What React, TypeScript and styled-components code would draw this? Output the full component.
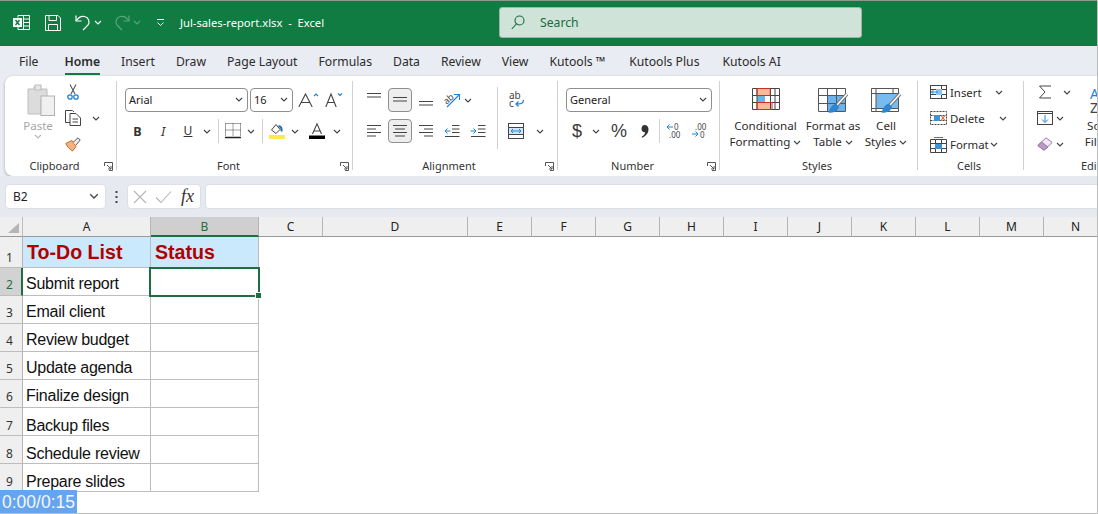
import React from 'react';
import styled, { createGlobalStyle } from 'styled-components';

const Global = createGlobalStyle`
  html, body { margin: 0; padding: 0; background: #fff; }
  body { font-family: "Noto Sans", "Open Sans", sans-serif; color: #333; }
  svg { overflow: visible; }
`;

const Page = styled.div`
  position: relative;
  width: 1098px;
  height: 514px;
  overflow: hidden;
  background: #fff;
  box-sizing: border-box;
  border-right: 1px solid #bdbdbd;
  border-bottom: 1px solid #bdbdbd;
`;

/* title bar */
const TitleBar = styled.div`
  height: 46px;
  background: #107c41;
  border-top: 1px solid #8a9c92;
  box-sizing: border-box;
  padding-bottom: 2px;
  display: flex;
  align-items: center;
  color: #fff;
`;

const QuickTool = styled.span<{ $w: number }>`
  width: ${p => p.$w}px;
  display: flex;
  justify-content: center;
  align-items: center;
  flex: none;
`;

const FileTitle = styled.span`
  font-size: 11.2px;
  white-space: pre;
  width: 319px;
  flex: none;
`;

const SearchBox = styled.div`
  width: 363px;
  height: 31px;
  box-sizing: border-box;
  background: #cfe3d8;
  border: 1px solid #9db5a8;
  border-radius: 3px;
  display: flex;
  align-items: center;
  gap: 15px;
  padding-left: 11px;
  color: #196b40;
  font-size: 12.2px;
`;

/* tabs */
const TabBar = styled.div`
  height: 30px;
  background: #e9ecf2;
  display: flex;
  align-items: center;
  padding-left: 19px;
  gap: 21px;
`;

const Tab = styled.span<{ $active?: boolean; $ml?: number }>`
  position: relative;
  font-size: 12.2px;
  font-weight: ${p => (p.$active ? 600 : 400)};
  color: #2b2b2b;
  white-space: nowrap;
  margin-left: ${p => p.$ml ?? 0}px;
  &::after {
    content: '';
    display: ${p => (p.$active ? 'block' : 'none')};
    position: absolute;
    left: 0;
    right: 0;
    bottom: -5px;
    height: 2px;
    background: #107c41;
  }
`;

/* ribbon */
const RibbonWrap = styled.div`
  background: #e9ecf2;
  height: 100px;
  padding-left: 5px;
`;

const Ribbon = styled.div`
  height: 100px;
  background: #fff;
  border-radius: 8px 0 0 8px;
  box-shadow: 0 1px 3px rgba(0, 0, 0, 0.3);
  display: flex;
  overflow: hidden;
`;

const Group = styled.section<{ $w: number; $last?: boolean }>`
  width: ${p => p.$w}px;
  flex: none;
  height: 100px;
  box-sizing: border-box;
  display: flex;
  flex-direction: column;
  position: relative;
  &::after {
    content: '';
    display: ${p => (p.$last ? 'none' : 'block')};
    position: absolute;
    right: 0;
    top: 5px;
    bottom: 6px;
    width: 1px;
    background: #d0d0d0;
  }
`;

const GroupBody = styled.div<{ $pl?: number }>`
  height: 82px;
  flex: none;
  padding-left: ${p => p.$pl ?? 0}px;
  display: flex;
`;

const GroupFooter = styled.div`
  display: flex;
  align-items: center;
  height: 14px;
  padding-right: 4px;
`;

const GroupLabel = styled.span`
  flex: 1;
  text-align: center;
  font-size: 11px;
  color: #333;
  white-space: nowrap;
`;

const LauncherSlot = styled.span`
  flex: none;
  display: flex;
  padding-top: 3px;
`;

const Stack = styled.div<{ $pt?: number; $gap?: number }>`
  display: flex;
  flex-direction: column;
  padding-top: ${p => p.$pt ?? 0}px;
  gap: ${p => p.$gap ?? 0}px;
`;

const Row = styled.div<{ $h?: number }>`
  display: flex;
  align-items: center;
  height: ${p => p.$h ?? 24}px;
`;

const Tool = styled.span<{ $w: number; $on?: boolean; $ml?: number }>`
  width: ${p => p.$w}px;
  height: 24px;
  margin-left: ${p => p.$ml ?? 0}px;
  flex: none;
  box-sizing: border-box;
  display: flex;
  align-items: center;
  justify-content: center;
  border-radius: 4px;
  background: ${p => (p.$on ? '#eeeeee' : 'transparent')};
  border: ${p => (p.$on ? '1px solid #8f8f8f' : 'none')};
  color: #333;
`;

const Divider = styled.span<{ $h?: number; $mx: number; $mr?: number; $mt?: number }>`
  width: 1px;
  flex: none;
  height: ${p => p.$h ?? 24}px;
  background: #d0d0d0;
  margin: ${p => p.$mt ?? 0}px ${p => p.$mr ?? p.$mx}px 0 ${p => p.$mx}px;
`;

const SelectBox = styled.div<{ $w: number; $ml?: number }>`
  width: ${p => p.$w}px;
  height: 24px;
  margin-left: ${p => p.$ml ?? 0}px;
  flex: none;
  box-sizing: border-box;
  border: 1px solid #8f8f8f;
  border-radius: 4px;
  display: flex;
  align-items: center;
  justify-content: space-between;
  padding: 0 4px 1px 3px;
  font-size: 11px;
  color: #222;
`;

const Paste = styled.div`
  width: 50px;
  margin-left: 8px;
  display: flex;
  flex-direction: column;
  align-items: center;
  padding-top: 8px;
  color: #a6a6a6;
  font-size: 11.5px;
  line-height: 16px;
`;

const BigButton = styled.div<{ $w: number }>`
  width: ${p => p.$w}px;
  flex: none;
  display: flex;
  flex-direction: column;
  align-items: center;
  padding-top: 12px;
  font-size: 11.6px;
  line-height: 16px;
  color: #2b2b2b;
  white-space: nowrap;
  svg { flex: none; }
`;

const BigIcon = styled.div`
  height: 30px;
`;

const ButtonLine = styled.span`
  display: flex;
  align-items: center;
  gap: 3px;
`;

const ListRow = styled.div`
  height: 26px;
  display: flex;
  align-items: center;
  font-size: 11.4px;
  color: #2b2b2b;
`;

const ListLabel = styled.span<{ $w: number }>`
  width: ${p => p.$w}px;
  margin-left: 3px;
  flex: none;
`;

const BoldMark = styled.span`
  font-weight: 700;
  font-size: 12.5px;
`;

const ItalicMark = styled.span`
  font-style: italic;
  font-size: 13px;
`;

const UnderMark = styled.span`
  font-size: 12px;
  line-height: 14px;
  text-decoration: underline;
`;

const NumberMark = styled.span`
  font-family: "Liberation Sans", Arial, sans-serif;
  font-size: 18px;
  color: #3a3a3a;
`;

/* formula bar */
const FormulaStrip = styled.div`
  height: 41px;
  box-sizing: border-box;
  background: #e6e9f0;
  padding: 8px 0 8px 5px;
  display: flex;
  align-items: stretch;
`;

const NameBox = styled.div`
  width: 101px;
  background: #fff;
  border: 1px solid #dcdfe5;
  border-radius: 4px;
  box-sizing: border-box;
  display: flex;
  align-items: center;
  justify-content: space-between;
  padding: 0 6px 0 7px;
  font-size: 12px;
  color: #222;
`;

const Dots = styled.span`
  width: 21px;
  flex: none;
  display: flex;
  align-items: center;
  justify-content: center;
`;

const FormulaButtons = styled.div`
  width: 74px;
  flex: none;
  background: #fff;
  border: 1px solid #dcdfe5;
  border-radius: 4px;
  box-sizing: border-box;
  display: flex;
  align-items: center;
  padding-left: 5px;
  gap: 8px;
`;

const FxLabel = styled.span`
  font-family: "Liberation Serif", serif;
  font-style: italic;
  font-size: 18px;
  margin-left: 1px;
  color: #333;
`;

const FormulaInput = styled.div`
  flex: 1;
  margin-left: 4px;
  background: #fff;
  border: 1px solid #dcdfe5;
  border-right: none;
  border-radius: 4px 0 0 4px;
`;

/* sheet */
const Sheet = styled.div`
  display: grid;
  grid-template-columns: 23px 128px 108px 64px 145px repeat(10, 64px);
  grid-template-rows: 20px 31px 28px repeat(7, 28px) 24px;
  background: #fff;
`;

const Corner = styled.div`
  background: #efefef;
  border-right: 1px solid #bdbdbd;
  border-bottom: 1px solid #9a9a9a;
  display: flex;
  align-items: flex-end;
  justify-content: flex-end;
  padding: 0 3px 3px 0;
`;

const ColHead = styled.div<{ $sel?: boolean }>`
  box-sizing: border-box;
  display: flex;
  align-items: center;
  justify-content: center;
  font-family: "Noto Sans", sans-serif;
  font-size: 12px;
  background: ${p => (p.$sel ? '#cfcfcf' : '#efefef')};
  color: ${p => (p.$sel ? '#1f6e43' : '#222')};
  border-right: 1px solid #b5b5b5;
  border-bottom: ${p => (p.$sel ? '2px solid #1f6e43' : '1px solid #9a9a9a')};
`;

const RowHead = styled.div<{ $sel?: boolean; $lift?: boolean }>`
  box-sizing: border-box;
  display: flex;
  align-items: flex-end;
  justify-content: flex-start;
  padding: 0 0 ${p => (p.$lift ? 2 : 1)}px 6px;
  font-size: 12px;
  line-height: 16px;
  background: ${p => (p.$sel ? '#d2d2d2' : '#efefef')};
  color: ${p => (p.$sel ? '#1f6e43' : '#333')};
  border-right: ${p => (p.$sel ? '2px solid #1f6e43' : '1px solid #b5b5b5')};
  border-bottom: 1px solid #bdbdbd;
`;

const Cell = styled.div<{ $title?: boolean; $lift?: boolean }>`
  box-sizing: border-box;
  display: flex;
  align-items: flex-end;
  padding: 0 0 ${p => (p.$title ? 1 : p.$lift ? 2 : 0)}px ${p => (p.$title ? 4 : 3)}px;
  font-family: "Liberation Sans", Arial, sans-serif;
  font-size: ${p => (p.$title ? 19.6 : 16)}px;
  letter-spacing: ${p => (p.$title ? 0 : -0.25)}px;
  font-weight: ${p => (p.$title ? 700 : 400)};
  line-height: ${p => (p.$title ? 27 : 19)}px;
  color: ${p => (p.$title ? '#b00000' : '#111')};
  background: ${p => (p.$title ? '#cbe9fd' : '#fff')};
  border-right: 1px solid #bdbdbd;
  border-bottom: 1px solid #bdbdbd;
  white-space: nowrap;
`;

const ActiveCell = styled.div`
  position: relative;
  box-sizing: border-box;
  margin: -1px -1px -1px -2px;
  border: 2px solid #1f6e43;
  background: #fff;
  z-index: 1;
`;

const FillHandle = styled.span`
  position: absolute;
  right: -4px;
  bottom: -4px;
  width: 5px;
  height: 5px;
  background: #1f6e43;
  border: 1px solid #fff;
`;

const Blank = styled.div`
  grid-column: 4 / -1;
`;

const Timer = styled.div`
  position: absolute;
  left: 0;
  bottom: 0;
  width: 77px;
  height: 23px;
  background: #66a5ee;
  color: #f2f7ff;
  font-family: "Liberation Sans", Arial, sans-serif;
  font-size: 17.5px;
  line-height: 24px;
  padding-left: 2px;
  box-sizing: border-box;
  white-space: nowrap;
  overflow: hidden;
  z-index: 2;
`;

/* small icons */
const Chev: React.FC<{ c?: string; s?: number }> = ({ c = '#444', s = 8 }) => (
  <svg width={s} height={s * 0.625} viewBox="0 0 8 5" fill="none">
    <path d="M1 1l3 3 3-3" stroke={c} strokeWidth="1.1" />
  </svg>
);

const Launcher = () => (
  <svg width="9" height="9" viewBox="0 0 9 9" fill="none" stroke="#555">
    <path d="M.5 4V.5H8.500V8.500H5" />
    <path d="M3 3l4 4M7 4v3H4" />
  </svg>
);

const ExcelLogo = () => (
  <svg width="17" height="17" viewBox="0 0 17 17" fill="none" stroke="#fff">
    <path d="M5 3.500V1.500H16.500V15.500H5V13" />
    <path d="M10.500 1.500V15.500M10.500 5H16.500M10.500 8.500H16.500M10.500 12H16.500" />
    <rect x="0" y="4" width="9" height="9" fill="#fff" stroke="none" />
    <path d="M2.500 6l4 5M6.500 6l-4 5" stroke="#107c41" strokeWidth="1.500" />
  </svg>
);

const SaveIcon = () => (
  <svg width="16" height="16" viewBox="0 0 16 16" fill="none" stroke="#fff">
    <path d="M.5.5H13L15.500 3V15.500H.5Z" />
    <path d="M4 .5V5.500H11.500V.5M3.500 15.500V9.500H12.500V15.500" />
  </svg>
);

const UndoIcon: React.FC<{ c: string; flip?: boolean }> = ({ c, flip }) => (
  <svg width="16" height="17" viewBox="0 0 16 17" fill="none" stroke={c} strokeWidth="1.2" transform={flip ? 'scale(-1 1)' : undefined}>
    <path d="M1 1.500V7H6.500" />
    <path d="M1.500 6.500C3.500 3.500 6.500 1.800 9.500 2.500 14 3.500 15 8 13 11L8 16" />
  </svg>
);

const CustomizeIcon = () => (
  <svg width="9" height="9" viewBox="0 0 9 9" fill="none" stroke="#fff">
    <path d="M1 1.500H8" />
    <path d="M1.500 4.500L4.500 7.500 7.500 4.500" />
  </svg>
);

const SearchIcon = () => (
  <svg width="14" height="15" viewBox="0 0 14 15" fill="none" stroke="#196b40" strokeWidth="1.1">
    <circle cx="8.500" cy="5.500" r="4.500" />
    <path d="M5.300 9L.8 14" />
  </svg>
);

const PasteIcon = () => (
  <svg width="33" height="34" viewBox="-5 0 33 34" fill="none">
    <path d="M1 5H7V2.500H14V5H20V16H14V30H1Z" fill="#dcdcdc" stroke="#bdbdbd" />
    <rect x="8" y="1" width="6" height="5" fill="#e6e6e6" stroke="#bdbdbd" />
    <rect x="14" y="12" width="13.500" height="19.500" fill="#f0f0f0" stroke="#b2b2b2" />
  </svg>
);

const CutIcon = () => (
  <svg width="12" height="16" viewBox="0 0 12 16" fill="none">
    <path d="M3 .5L8 10M9 .5L4 10" stroke="#555" strokeWidth="1.100" />
    <circle cx="3" cy="13" r="2.200" stroke="#1e84d4" strokeWidth="1.300" />
    <circle cx="9" cy="13" r="2.200" stroke="#1e84d4" strokeWidth="1.300" />
  </svg>
);

const CopyIcon = () => (
  <svg width="16" height="16" viewBox="0 0 16 16" fill="none" stroke="#444">
    <path d="M5 12.500H.5V.5H7.500L9 2" />
    <path d="M5 3.500H11L15.500 8V15.500H5Z" fill="#fff" />
    <path d="M7.500 9H13M7.500 12H13" />
  </svg>
);

const PainterIcon = () => (
  <svg width="16" height="15" viewBox="0 0 16 15" fill="none">
    <path d="M.8 6.500L7 3.500 11 9.500 7.500 14C4.500 12 2 9.500.8 6.500Z" fill="#f4b183" stroke="#d2691e" />
    <path d="M8 5.500L13 .8 15.200 3 11 8" fill="#eee" stroke="#555" />
  </svg>
);

const GrowFont: React.FC<{ up?: boolean; s: number }> = ({ up, s }) => (
  <svg width={s + 7} height="16" viewBox={`0 0 ${s + 7} 16`} fill="none">
    <path d={`M.8 15L${s / 2} 2 ${s - 0.8} 15M${s * 0.2} 10.500H${s * 0.8}`} stroke="#444" strokeWidth="1.100" />
    <path d={up ? `M${s + 1} 4l2-2 2 2` : `M${s + 1} 1.500l2 2 2-2`} stroke="#1e84d4" strokeWidth="1.100" />
  </svg>
);

const BorderIcon = () => (
  <svg width="16" height="16" viewBox="0 0 16 16" fill="none" stroke="#444">
    <path d="M.5.5H15.500M.5.5V13M15.500.5V13M8 .5V13M.5 7H15.500" strokeDasharray="1 1" />
    <path d="M0 14.500H16" strokeWidth="1.600" stroke="#222" />
  </svg>
);

const FillIcon = () => (
  <svg width="16" height="16" viewBox="0 0 16 16" fill="none">
    <path d="M2.500 7L7 1.500 11 6.500 7 10.500Z" fill="#fff" stroke="#444" />
    <path d="M9.500 3C12 3.500 13 5 12.500 8.500" stroke="#1e6fc4" strokeWidth="2" />
    <rect x="0" y="12" width="16" height="4" fill="#ffe94f" />
  </svg>
);

const FontColorIcon = () => (
  <svg width="16" height="16" viewBox="0 0 16 16" fill="none">
    <path d="M3.500 11L8 .8 12.500 11M5 8H11" stroke="#444" strokeWidth="1.100" />
    <rect x="0" y="12.500" width="16" height="3.500" fill="#000" />
  </svg>
);

const Lines: React.FC<{ rows: [number, number][]; y?: number }> = ({ rows, y = 2 }) => (
  <svg width="16" height="16" viewBox="0 0 16 16" fill="none" stroke="#444">
    {rows.map(([a, b], i) => (
      <path key={i} d={`M${a} ${y + i * 3.5 + 0.5}H${b}`} />
    ))}
  </svg>
);

const Orient = () => (
  <svg width="17" height="16" viewBox="0 0 17 16" fill="none">
    <text x="0" y="10" fontFamily="Noto Sans" fontSize="9" fill="#444" transform="rotate(-40 5 8)">ab</text>
    <path d="M3 15L15 3M10 2.500H15.500V8" stroke="#1e84d4" strokeWidth="1.100" />
  </svg>
);

const IndentIcon: React.FC<{ out?: boolean }> = ({ out }) => (
  <svg width="16" height="14" viewBox="0 0 16 14" fill="none">
    <path d="M8 1.500H15.500M8 5H15.500M8 8.500H15.500M1 12.500H15.500" stroke="#444" />
    {out ? (
      <path d="M6.500 7H1M3.500 4.500L1 7l2.500 2.500" stroke="#1e84d4" />
    ) : (
      <path d="M.5 7H6M3.500 4.500L6 7l-2.500 2.500" stroke="#1e84d4" />
    )}
  </svg>
);

const WrapIcon = () => (
  <svg width="16" height="18" viewBox="0 0 16 18" fill="none">
    <text x="0" y="8" fontFamily="Noto Sans" fontSize="10" fill="#444">ab</text>
    <text x="0" y="16" fontFamily="Noto Sans" fontSize="10" fill="#444">c</text>
    <path d="M14.500 9C14.500 13 11 13 7 13M9.500 10.500L7 13l2.500 2.500" stroke="#1e84d4" strokeWidth="1.200" />
  </svg>
);

const MergeIcon = () => (
  <svg width="16" height="16" viewBox="0 0 16 16" fill="none">
    <rect x=".5" y=".5" width="15" height="15" stroke="#444" />
    <path d="M.5 4.500H15.500M.5 11.500H15.500" stroke="#444" />
    <rect x="1" y="5" width="14" height="6" fill="#cfe6fa" />
    <path d="M3 8H13M5 6l-2 2 2 2M11 6l2 2-2 2" stroke="#1e84d4" />
  </svg>
);

const CommaIcon = () => (
  <svg width="8" height="13" viewBox="0 0 8 13">
    <path d="M3.500 0C6 0 7.500 1.800 7.500 4.200 7.500 8 5 11 1.200 12.800L.6 11.800C2.800 10.500 4 9 4.200 7.300 2 7.600.5 6 .5 3.700.5 1.500 1.800 0 3.500 0Z" fill="#333" />
  </svg>
);

const DecimalIcon: React.FC<{ more?: boolean }> = ({ more }) => (
  <svg width="16" height="16" viewBox="0 0 16 16" fill="none">
    <text x={more ? 3 : 8} y="7" fontFamily="Noto Sans" fontSize="8" fill="#444">{more ? '.00' : '0'}</text>
    <text x={more ? 8 : 3} y="15" fontFamily="Noto Sans" fontSize="8" fill="#444">{more ? '0' : '.00'}</text>
    {more ? (
      <path d="M0 11H6M3.500 8.500L6 11l-2.500 2.500" stroke="#1e84d4" />
    ) : (
      <path d="M7 4H1M3.500 1.500L1 4l2.500 2.500" stroke="#1e84d4" />
    )}
  </svg>
);

const ConditionalIcon = () => (
  <svg width="28" height="22" viewBox="0 0 28 22" fill="none">
    <rect x=".5" y=".5" width="27" height="21" fill="#fff" />
    <rect x="5" y="1" width="12" height="6" fill="#f8b9a0" />
    <rect x="5" y="15" width="14" height="6" fill="#f8b9a0" />
    <rect x="5" y="8" width="8" height="6" fill="#6cb2eb" />
    <path d="M.5.5H27.500V21.500H.5ZM.5 7.500H27.500M.5 14.500H27.500M5 .5V21.500M18.500 .5V21.500M23 .5V21.500" stroke="#444" />
    <path d="M5 .5H18V7.500H5ZM5 14.500H20V21.500H5Z" stroke="#c8321e" />
  </svg>
);

const Brush = () => (
  <>
    <path d="M29 6L19 17" stroke="#777" strokeWidth="3.400" />
    <path d="M29 6L19 17" stroke="#fff" strokeWidth="1.500" />
    <path d="M18 15.500C14 16.500 12 20 10.500 24.500 15.500 25.500 20 23 21 19Z" fill="#2e86d0" />
  </>
);

const TableIcon = () => (
  <svg width="30" height="28" viewBox="0 0 30 28" fill="none">
    <rect x="10" y="8" width="18" height="15" fill="#6cb2eb" />
    <path d="M.5.5H27.500V23.500H.5ZM.5 7.500H27.500M.5 15.500H27.500M9.500 .5V23.500M18.500 .5V23.500" stroke="#555" />
    <Brush />
  </svg>
);

const CellStyleIcon = () => (
  <svg width="30" height="28" viewBox="0 0 30 28" fill="none">
    <rect x="5" y="6" width="22" height="14" fill="#79bbef" />
    <path d="M.5.5H27.500V23.500H.5ZM.5 5.500H27.500M.5 20.500H27.500M5 .5V23.500M22 .5V5.500" stroke="#555" />
    <Brush />
  </svg>
);

const InsertIcon = () => (
  <svg width="17" height="14" viewBox="0 0 17 14" fill="none">
    <rect x=".5" y=".5" width="16" height="13" stroke="#444" />
    <path d="M.5 4.500H16.500M.5 9.500H16.500M11.500 .5V13.500" stroke="#444" />
    <rect x="6" y="4" width="6" height="6" fill="#8cc4f0" />
    <path d="M1 7H8M4 4.500L1.500 7 4 9.500" stroke="#1e84d4" />
  </svg>
);

const DeleteIcon = () => (
  <svg width="17" height="14" viewBox="0 0 17 14" fill="none">
    <path d="M.5.5H16.500V13.500H.5ZM.5 4.500H16.500M.5 9.500H16.500" stroke="#444" strokeDasharray="2 1" />
    <rect x="4" y="4" width="6" height="6" fill="#3c93d8" />
    <path d="M11 4.500l4 5M15 4.500l-4 5" stroke="#e0642e" strokeWidth="1.200" />
  </svg>
);

const FormatIcon = () => (
  <svg width="17" height="17" viewBox="0 0 17 17" fill="none">
    <path d="M.5 3.500H16.500V16.500H.5ZM.5 7.500H16.500M.5 12.500H16.500M5.500 3.500V16.500M11.500 3.500V16.500" stroke="#444" />
    <rect x="5" y="8" width="7" height="5" fill="#3c93d8" />
    <path d="M4 1.500H13" stroke="#1e84d4" />
  </svg>
);

const SumIcon = () => (
  <svg width="14" height="14" viewBox="0 0 14 14" fill="none" stroke="#444">
    <path d="M13 1H1.500L7 7 1.500 13H13" />
  </svg>
);

const FillDownIcon = () => (
  <svg width="16" height="14" viewBox="0 0 16 14" fill="none">
    <rect x=".5" y=".5" width="15" height="13" stroke="#444" />
    <path d="M.5 2.500H15.500" stroke="#444" />
    <path d="M8 4V11M5 8.500L8 11.500 11 8.500" stroke="#1e84d4" />
  </svg>
);

const EraserIcon = () => (
  <svg width="16" height="14" viewBox="0 0 16 14" fill="none">
    <path d="M9 .8L15.200 5.500 7 13.200.8 8.500Z" fill="#f2e9f4" stroke="#9a7aa6" />
    <path d="M.8 8.500L4.500 5 11 10 7 13.200Z" fill="#b79bc2" stroke="#9a7aa6" />
  </svg>
);

const SortIcon = () => (
  <svg width="28" height="28" viewBox="0 0 28 28" fill="none">
    <text x="0" y="11" fontFamily="Noto Sans" fontSize="14" fill="#1e84d4">A</text>
    <text x="0" y="25" fontFamily="Noto Sans" fontSize="14" fill="#444">Z</text>
  </svg>
);

const CancelMark = () => (
  <svg width="14" height="14" viewBox="0 0 14 14" fill="none" stroke="#b5b5b5" strokeWidth="1.100">
    <path d="M1 1l12 12M13 1L1 13" />
  </svg>
);

const ConfirmMark = () => (
  <svg width="17" height="14" viewBox="0 0 17 14" fill="none" stroke="#b5b5b5" strokeWidth="1.100">
    <path d="M1 7.500L6 12.500 16 1.500" />
  </svg>
);

const CornerMark = () => (
  <svg width="11" height="10" viewBox="0 0 11 10">
    <path d="M11 0V10H0Z" fill="#b5b5b5" />
  </svg>
);

const DotsIcon = () => (
  <svg width="3" height="12" viewBox="0 0 3 12" fill="#444">
    <rect x=".5" y="0" width="2" height="2" />
    <rect x=".5" y="5" width="2" height="2" />
    <rect x=".5" y="10" width="2" height="2" />
  </svg>
);

const columns = ['A', 'B', 'C', 'D', 'E', 'F', 'G', 'H', 'I', 'J', 'K', 'L', 'M', 'N'];
const tasks = ['Submit report', 'Email client', 'Review budget', 'Update agenda', 'Finalize design', 'Backup files', 'Schedule review', 'Prepare slides'];
const tabs: [string, number][] = [
  ['File', 0], ['Home', 5], ['Insert', 0], ['Draw', 0], ['Page Layout', 0], ['Formulas', 0],
  ['Data', 0], ['Review', 0], ['View', 0], ['Kutools ™', 0], ['Kutools Plus', 3], ['Kutools AI', 2],
];

const Footer: React.FC<{ label: string; launcher?: boolean }> = ({ label, launcher }) => (
  <GroupFooter>
    <GroupLabel>{label}</GroupLabel>
    {launcher && <LauncherSlot><Launcher /></LauncherSlot>}
  </GroupFooter>
);

const App: React.FC = () => (
  <Page>
    <Global />
    <TitleBar>
      <QuickTool $w={13} />
      <QuickTool $w={17}><ExcelLogo /></QuickTool>
      <QuickTool $w={15} />
      <QuickTool $w={16}><SaveIcon /></QuickTool>
      <QuickTool $w={14} />
      <QuickTool $w={16}><UndoIcon c="#fff" /></QuickTool>
      <QuickTool $w={14}><Chev c="#fff" /></QuickTool>
      <QuickTool $w={9} />
      <QuickTool $w={16}><UndoIcon c="#5aa67d" flip /></QuickTool>
      <QuickTool $w={14}><Chev c="#5aa67d" /></QuickTool>
      <QuickTool $w={32}><CustomizeIcon /></QuickTool>
      <QuickTool $w={4} />
      <FileTitle>Jul-sales-report.xlsx  -  Excel</FileTitle>
      <SearchBox><SearchIcon />Search</SearchBox>
    </TitleBar>

    <TabBar>
      {tabs.map(([t, ml]) => <Tab key={t} $active={t === 'Home'} $ml={ml}>{t}</Tab>)}
    </TabBar>

    <RibbonWrap>
      <Ribbon>
        <Group $w={112}>
          <GroupBody>
            <Paste>
              <PasteIcon />
              <span>Paste</span>
              <Chev c="#b5b5b5" />
            </Paste>
            <Stack $pt={4} $gap={2}>
              <Row><Tool $w={20}><CutIcon /></Tool></Row>
              <Row><Tool $w={20}><CopyIcon /></Tool><Tool $w={26}><Chev /></Tool></Row>
              <Row><Tool $w={20}><PainterIcon /></Tool></Row>
            </Stack>
          </GroupBody>
          <Footer label="Clipboard" launcher />
        </Group>

        <Group $w={236}>
          <GroupBody $pl={8}>
            <Stack $pt={12} $gap={7}>
              <Row>
                <SelectBox $w={123}>Arial<Chev /></SelectBox>
                <SelectBox $w={43} $ml={2}>16<Chev /></SelectBox>
                <Tool $w={26} $ml={3}><GrowFont up s={15} /></Tool>
                <Tool $w={24}><GrowFont s={12} /></Tool>
              </Row>
              <Row>
                <Tool $w={25}><BoldMark>B</BoldMark></Tool>
                <Tool $w={26}><ItalicMark>I</ItalicMark></Tool>
                <Tool $w={24}><UnderMark>U</UnderMark></Tool>
                <Tool $w={14}><Chev /></Tool>
                <Divider $mx={4} />
                <Tool $w={20}><BorderIcon /></Tool>
                <Tool $w={16}><Chev /></Tool>
                <Divider $mx={3} $mr={2} />
                <Tool $w={24}><FillIcon /></Tool>
                <Tool $w={12}><Chev /></Tool>
                <Tool $w={32}><FontColorIcon /></Tool>
                <Tool $w={8}><Chev /></Tool>
              </Row>
            </Stack>
          </GroupBody>
          <Footer label="Font" launcher />
        </Group>

        <Group $w={205}>
          <GroupBody $pl={8}>
            <Stack $pt={12} $gap={7}>
              <Row>
                <Tool $w={26}><Lines rows={[[1, 15], [1, 15]]} y={1} /></Tool>
                <Tool $w={24} $on $ml={1}><Lines rows={[[1, 15], [1, 15]]} y={5} /></Tool>
                <Tool $w={26} $ml={1}><Lines rows={[[1, 15], [1, 15]]} y={9} /></Tool>
                <Tool $w={24} $ml={1}><Orient /></Tool>
                <Tool $w={8}><Chev /></Tool>
              </Row>
              <Row>
                <Tool $w={26}><Lines rows={[[1, 15], [1, 10], [1, 15], [1, 10]]} /></Tool>
                <Tool $w={24} $on $ml={1}><Lines rows={[[1, 15], [3, 13], [1, 15], [3, 13]]} /></Tool>
                <Tool $w={26} $ml={1}><Lines rows={[[1, 15], [6, 15], [1, 15], [6, 15]]} /></Tool>
                <Tool $w={26}><IndentIcon out /></Tool>
                <Tool $w={26}><IndentIcon /></Tool>
              </Row>
            </Stack>
            <Divider $h={62} $mx={6} $mt={11} />
            <Stack $pt={12} $gap={7}>
              <Row><Tool $w={25}><WrapIcon /></Tool></Row>
              <Row>
                <Tool $w={24}><MergeIcon /></Tool>
                <Tool $w={24}><Chev /></Tool>
              </Row>
            </Stack>
          </GroupBody>
          <Footer label="Alignment" launcher />
        </Group>

        <Group $w={162}>
          <GroupBody $pl={8}>
            <Stack $pt={12} $gap={7}>
              <Row><SelectBox $w={146}>General<Chev /></SelectBox></Row>
              <Row>
                <Tool $w={22}><NumberMark>$</NumberMark></Tool>
                <Tool $w={16}><Chev /></Tool>
                <Tool $w={30}><NumberMark>%</NumberMark></Tool>
                <Tool $w={22}><CommaIcon /></Tool>
                <Divider $mx={3} />
                <Tool $w={22}><DecimalIcon /></Tool>
                <Tool $w={30}><DecimalIcon more /></Tool>
              </Row>
            </Stack>
          </GroupBody>
          <Footer label="Number" launcher />
        </Group>

        <Group $w={198}>
          <GroupBody>
            <BigButton $w={91}>
              <BigIcon><ConditionalIcon /></BigIcon>
              <span>Conditional</span>
              <ButtonLine>Formatting<Chev /></ButtonLine>
            </BigButton>
            <BigButton $w={44}>
              <BigIcon><TableIcon /></BigIcon>
              <span>Format as</span>
              <ButtonLine>Table<Chev /></ButtonLine>
            </BigButton>
            <BigButton $w={62}>
              <BigIcon><CellStyleIcon /></BigIcon>
              <span>Cell</span>
              <ButtonLine>Styles<Chev /></ButtonLine>
            </BigButton>
          </GroupBody>
          <Footer label="Styles" />
        </Group>

        <Group $w={106}>
          <GroupBody $pl={12}>
            <Stack $pt={3}>
              <ListRow><InsertIcon /><ListLabel $w={45}>Insert</ListLabel><Chev /></ListRow>
              <ListRow><DeleteIcon /><ListLabel $w={49}>Delete</ListLabel><Chev /></ListRow>
              <ListRow><FormatIcon /><ListLabel $w={40}>Format</ListLabel><Chev /></ListRow>
            </Stack>
          </GroupBody>
          <Footer label="Cells" />
        </Group>

        <Group $w={154} $last>
          <GroupBody $pl={13}>
            <Stack $pt={3}>
              <ListRow><Tool $w={16}><SumIcon /></Tool><Tool $w={28}><Chev /></Tool></ListRow>
              <ListRow><Tool $w={16}><FillDownIcon /></Tool><Tool $w={14}><Chev /></Tool></ListRow>
              <ListRow><Tool $w={16}><EraserIcon /></Tool><Tool $w={14}><Chev /></Tool></ListRow>
            </Stack>
            <BigButton $w={46}>
              <BigIcon><SortIcon /></BigIcon>
              <span>Sort &amp;</span>
              <ButtonLine>Filter<Chev /></ButtonLine>
            </BigButton>
          </GroupBody>
          <Footer label="Editing" />
        </Group>
      </Ribbon>
    </RibbonWrap>

    <FormulaStrip>
      <NameBox>B2<Chev s={10} /></NameBox>
      <Dots><DotsIcon /></Dots>
      <FormulaButtons>
        <CancelMark />
        <ConfirmMark />
        <FxLabel>fx</FxLabel>
      </FormulaButtons>
      <FormulaInput />
    </FormulaStrip>

    <Sheet>
      <Corner><CornerMark /></Corner>
      {columns.map(c => <ColHead key={c} $sel={c === 'B'}>{c}</ColHead>)}

      <RowHead>1</RowHead>
      <Cell $title>To-Do List</Cell>
      <Cell $title>Status</Cell>
      <Blank />

      {tasks.map((t, i) => (
        <React.Fragment key={t}>
          <RowHead $sel={i === 0} $lift={i < 5}>{i + 2}</RowHead>
          <Cell $lift={i < 5}>{t}</Cell>
          {i === 0 ? <ActiveCell><FillHandle /></ActiveCell> : <Cell />}
          <Blank />
        </React.Fragment>
      ))}
      <RowHead />
    </Sheet>

    <Timer>0:00/0:15</Timer>
  </Page>
);

export default App;
